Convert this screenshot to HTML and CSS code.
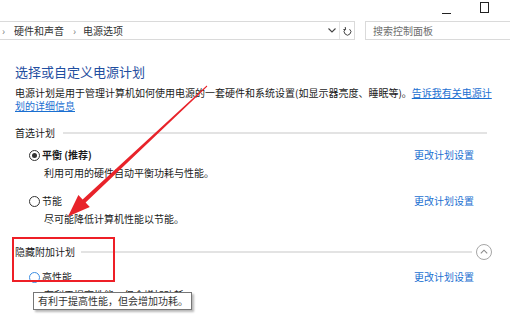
FILE: index.html
```html
<!DOCTYPE html>
<html lang="zh-CN">
<head>
<meta charset="utf-8">
<title>电源选项</title>
<link rel="stylesheet" href="styles.css">
</head>
<body>
<div class="titlebar">
  <span class="win-min"></span>
  <span class="win-max"></span>
</div>
<div class="navbar">
  <div class="address">
    <span class="sep sep-first">›</span>
    <span class="crumb">硬件和声音</span>
    <span class="sep sep-mid">›</span>
    <span class="crumb">电源选项</span>
    <span class="drop"><svg width="8" height="5" viewBox="0 0 8 5"><path d="M0.5 0.5 L4 4 L7.5 0.5" fill="none" stroke="#444" stroke-width="1.1"/></svg></span>
    <span class="refresh"><svg width="9" height="10" viewBox="0 0 9 10"><path d="M6.6 3.2 A3.3 3.3 0 1 1 2.4 3.2" fill="none" stroke="#444" stroke-width="1"/><path d="M2.2 1 L2.6 3.4 L0.3 3.6" fill="none" stroke="#444" stroke-width="1"/></svg></span>
  </div>
  <div class="search">搜索控制面板</div>
</div>
<main class="content">
  <h1 class="title">选择或自定义电源计划</h1>
  <p class="intro">电源计划是用于管理计算机如何使用电源的一套硬件和系统设置(如显示器亮度、睡眠等)。<a class="intro-link" href="#">告诉我有关电源计<br>划的详细信息</a></p>

  <section class="group group-preferred">
    <div class="group-head"><span>首选计划</span><span class="rule rule-first"></span></div>
    <div class="plan">
      <div class="plan-row">
        <label class="plan-name bold"><span class="radio checked"></span>平衡 (推荐)</label>
        <a class="plan-link" href="#">更改计划设置</a>
      </div>
      <div class="plan-desc">利用可用的硬件自动平衡功耗与性能。</div>
    </div>
    <div class="plan">
      <div class="plan-row">
        <label class="plan-name"><span class="radio"></span>节能</label>
        <a class="plan-link" href="#">更改计划设置</a>
      </div>
      <div class="plan-desc">尽可能降低计算机性能以节能。</div>
    </div>
  </section>

  <section class="group group-hidden">
    <div class="group-head head-tall"><span>隐藏附加计划</span><span class="rule rule-second"></span><span class="collapse"><svg width="16" height="16" viewBox="0 0 16 16"><circle cx="8" cy="8" r="7.5" fill="#fff" stroke="#a6a6a6" stroke-width="1"/><path d="M4.8 9.4 L8 6.2 L11.2 9.4" fill="none" stroke="#8a8a8a" stroke-width="1.1"/></svg></span></div>
    <div class="plan plan-first">
      <div class="plan-row">
        <label class="plan-name"><span class="radio hover"></span>高性能</label>
        <a class="plan-link" href="#">更改计划设置</a>
      </div>
      <div class="plan-desc">有利于提高性能，但会增加功耗。</div>
    </div>
  </section>
</main>

<div class="highlight-box"></div>
<svg class="arrow" width="510" height="327" viewBox="0 0 510 327">
  <polygon points="206.7,85.6 82.6,199.4 78.4,195.0 68,216.5 89.8,207 85.6,202.6 207.3,86.4" fill="#e8232a"/>
</svg>
<div class="tooltip">有利于提高性能，但会增加功耗。</div>
</body>
</html>
```

FILE: styles.css
```css
* {
  box-sizing: border-box;
  margin: 0;
  padding: 0;
}

html,
body {
  width: 510px;
  height: 327px;
  overflow: hidden;
  background: #ffffff;
}

body {
  position: relative;
  font-family: "Noto Sans CJK SC", "Microsoft YaHei", sans-serif;
  font-size: 10px;
  color: #1a1a1a;
}

/* title bar */
.titlebar {
  height: 21px;
  display: flex;
  justify-content: flex-end;
  align-items: flex-start;
}

.win-min {
  width: 9px;
  height: 1px;
  background: #222;
  margin-top: 13px;
  margin-right: 29px;
}

.win-max {
  width: 9px;
  height: 11px;
  border: 1px solid #222;
  margin-top: 2px;
  margin-right: 21px;
}

/* navigation bar */
.navbar {
  height: 19px;
  display: flex;
}

.address {
  width: 355px;
  border: 1px solid #dadada;
  border-left: none;
  display: flex;
  align-items: center;
  color: #333;
  line-height: 17px;
}

.sep {
  color: #808080;
  display: inline-block;
}

.sep-first {
  padding-left: 2px;
  width: 14px;
}

.sep-mid {
  padding-left: 9px;
  width: 19px;
}

.drop {
  margin-left: auto;
  width: 11px;
  height: 17px;
  display: flex;
  align-items: center;
}

.refresh {
  width: 15px;
  height: 17px;
  border-left: 1px solid #e4e4e4;
  display: flex;
  align-items: center;
  justify-content: center;
}

.search {
  margin-left: 10px;
  flex: 1;
  border: 1px solid #dadada;
  border-right: none;
  padding-left: 7px;
  color: #6d6d6d;
  line-height: 17px;
}

/* content */
.content {
  padding: 0 18px 0 15px;
}

.title {
  font-size: 13px;
  font-weight: normal;
  color: #1f4ea0;
  line-height: 16px;
  margin-top: 24px;
}

.intro {
  line-height: 13px;
  margin-top: 6px;
}

a {
  color: #1a6fd1;
  text-decoration: none;
}

.intro-link {
  text-decoration: underline;
}

.group-preferred {
  margin-top: 14px;
}

.group-head {
  display: flex;
  align-items: center;
  height: 14px;
  line-height: 14px;
}

.head-tall {
  height: 16px;
}

.rule {
  flex: 1;
  height: 2px;
  background: #e3e3e3;
}

.rule-first {
  margin-left: 8px;
  margin-right: 5px;
}

.rule-second {
  margin-left: 6px;
  margin-right: 4px;
}

.collapse {
  width: 16px;
  height: 16px;
  display: flex;
}

.plan {
  margin-top: 14px;
}

.group-head + .plan {
  margin-top: 8px;
}

.group-hidden .group-head + .plan {
  margin-top: 10px;
}

.plan-row {
  display: flex;
  justify-content: space-between;
  align-items: center;
  height: 14px;
  line-height: 14px;
  margin-left: 14px;
}

.plan-name {
  display: flex;
  align-items: center;
}

.bold {
  font-weight: bold;
}

.radio {
  width: 11px;
  height: 11px;
  border: 1px solid #333;
  border-radius: 50%;
  margin-right: 2px;
  display: flex;
  align-items: center;
  justify-content: center;
}

.radio.checked::after {
  content: "";
  width: 5px;
  height: 5px;
  border-radius: 50%;
  background: #333;
}

.radio.hover {
  border: 1.5px solid #3c8ee2;
}

.plan-link {
  margin-right: 18px;
}

.plan-desc {
  margin-left: 29px;
  line-height: 14px;
  margin-top: 4px;
}

.group-hidden {
  margin-top: 18px;
}

/* annotation overlays */
.highlight-box {
  position: absolute;
  left: 12px;
  top: 237px;
  width: 103px;
  height: 45px;
  border: 2px solid #ee1f26;
}

.arrow {
  position: absolute;
  left: 0;
  top: 0;
  pointer-events: none;
}

.tooltip {
  position: absolute;
  left: 33px;
  top: 292px;
  width: 159px;
  height: 18px;
  border: 1px solid #767676;
  background: #ffffff;
  box-shadow: 2px 2px 2px rgba(0, 0, 0, 0.28);
  padding-left: 4px;
  line-height: 16px;
  color: #333;
}
```
